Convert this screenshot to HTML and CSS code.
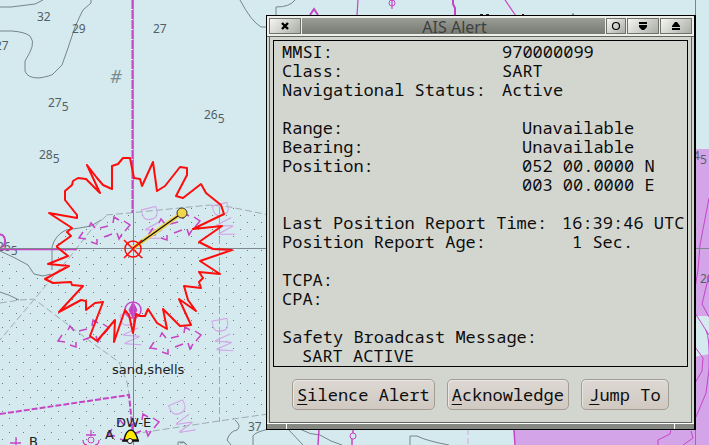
FILE: index.html
```html
<!DOCTYPE html>
<html lang="en">
<head>
<meta charset="utf-8">
<title>AIS Alert</title>
<link rel="stylesheet" href="styles.css">
</head>
<body>
<main class="chart">
  <svg class="map" viewBox="0 0 709 445" preserveAspectRatio="xMinYMin slice" role="img" aria-label="Nautical chart">
    <defs>
      <pattern id="dots" width="14" height="14" patternUnits="userSpaceOnUse">
        <rect x="9" y="12" width="1" height="1" fill="#6b7a7f"/>
        <rect x="2" y="5" width="1" height="1" fill="#6b7a7f"/>
      </pattern>
      <g id="lane" fill="none" stroke="#c545c5" stroke-width="1.5">
        <path d="M-22 2L-26 8L-19 9M-16 -3L-14 -7L-10 -2M-14 12L-8 14L-8 9M-5 -2L3 -4M-1 7L7 4M8 -7L9 -13L14 -10M19 -9L25 -5L20 1M12 3L14 9L17 4"/>
      </g>
    </defs>

    <!-- Sand area and restricted zone -->
    <path d="M0 251L15 258L33 274L44 276L52 270V247L60 235L100 222L108 215L158 212L210 205L230 207L268 214V415L133 434V445H0Z" fill="url(#dots)"/>
    <path d="M694 149H709V316H694Z M694 357L709 354V445H516L513 429H694Z" fill="#d3a5e8"/>

    <!-- Depth contours -->
    <g fill="none" stroke="#73868d" stroke-width="1">
      <path d="M0 7H11L35 4L43 0M0 31H12Q25 32 30 36Q34 41 32 47Q30 53 25 61V71Q27 78 39 78Q51 76 53 74L62 65L68 48L75 27L80 16L83 10L91 3V0M240 0Q251 21 261 27H267M276 16V7Q290 7 295 0"/>
      <path d="M52 270V247Q55 235 66 230Q80 228 91 226L101 220M0 251L15 258L28 265L34 274L43 276L51 274M0 292Q10 295 19 300"/>
      <path d="M235 420Q242 426 237 430Q230 431 227 440L231 445M280 425L269 429Q255 432 253 436V445M180 443Q184 441 187 445M288 429L303 445M300 429Q310 435 320 435L331 441L342 445M410 445V436H417Q427 441 449 445M178 445V442H184L187 445"/>
      <path d="M695.500 0V149M695.500 425V445"/>
      <path d="M106 215L129 213L210 205L230 207L269 215M106 216L91 230L69 258L0 340M0 303L20 300L34 299L91 342L119 362L127 382L129 394M219.500 207V422M133 434L219 421L268 414" stroke="#9aacb2" stroke-dasharray="7 3"/>
    </g>

    <!-- Soundings -->
    <g class="sounding">
      <text x="37" y="21">32</text><text x="72" y="33">29</text><text x="-5" y="50">27</text><text x="153" y="33">27</text>
      <text x="48" y="107">27<tspan dy="4">5</tspan></text>
      <text x="204" y="119">26<tspan dy="4">5</tspan></text>
      <text x="39" y="159">28<tspan dy="4">5</tspan></text>
      <text x="-3" y="251">26<tspan dy="4">5</tspan></text>
      <text x="248" y="431">37</text><text x="693" y="160">4<tspan dy="4">5</tspan></text><text x="700" y="283">20</text>
      <text x="110" y="83" class="hash">#</text>
    </g>

    <!-- Deep water route -->
    <g class="route">
      <text transform="translate(140 207) rotate(76)">DW</text>
      <text transform="translate(211 203) rotate(76)">DW</text>
      <text transform="translate(119 312) rotate(80)">DW</text>
      <text transform="translate(211 318) rotate(80)">DW</text>
      <text transform="translate(167 403) rotate(67)">DW</text>
    </g>
    <use href="#lane" x="105" y="230"/><use href="#lane" x="175" y="226"/>
    <use href="#lane" x="84" y="333"/><use href="#lane" x="176" y="340"/>
    <use href="#lane" x="134" y="427"/>
    <g fill="none" stroke="#c545c5">
      <path d="M132.500 0V213" stroke-width="2" stroke-dasharray="9 1"/>
      <path d="M0 249.500H77" stroke-width="1.500"/>
      <path d="M0 414L129 395L133 434" stroke-width="2" stroke-dasharray="6 2"/>
      <path d="M-2 235A5 6 0 0 1 5 241A5 6 0 0 1 1 247" stroke-width="2"/>
      <circle cx="133" cy="310" r="8" stroke-width="1.500"/>
      <path d="M133 302l4 8l-4 8l-4 -8z" fill="#c545c5"/>
      <path d="M357 15L358 0M505 0L516 16M392 -1V9" stroke-width="1.200"/>
      <circle cx="392" cy="3" r="3"/>
      <path d="M310 15l4 -6l4 6M453 0V4L455 8V15" stroke-width="2"/>
      <path d="M319 429L318 445M353 429V433M352 439V445M514 429L515 445" stroke-width="1.500"/>
      <circle cx="353" cy="436" r="3"/>
      <path d="M10 443H21M16 437V445M86 435H96M91 430V436M83 440Q83 445 87 445M99 440Q99 445 95 445" stroke-width="1.300"/>
      <circle cx="91" cy="440" r="3"/>
      <path d="M709 198L700 245L698 270L695 288M709 275L702 304L709 317M695 313L709 335M695 347L703 358L702 371L695 383M706 330Q710 338 709 370L706 393L696 417M671 429L670 434L658 440V445M691 431L693 438L683 445"/>
      <path d="M468 429V445" stroke="#d3a5e8" stroke-dasharray="6 3"/>
    </g>

    <!-- Cursor cross lines -->
    <path d="M133.500 213V445M0 248.500H709" fill="none" stroke="#7d878c" stroke-width="1"/>
    <path d="M133.500 0V213" fill="none" stroke="#7d878c" stroke-width="1" opacity=".7"/>

    <!-- SART alert burst -->
    <path class="burst" d="M57 246L71 236L67 232L72 228L49 213L77 218L77 215L65 200V191L72 185L73 181L78 178L86 179L100 193L87 165L97 178L103 185L112 189V166L118 164L123 158H130L134 178L140 179L142 186L153 162L157 191L165 186L180 167L187 168V175L176 196L183 198L201 184L206 193L221 205L224 214L193 229L222 226L199 242L213 249L232 250L200 261L220 274L199 272L203 278L199 282L201 288L184 286L188 300L196 311L179 299L191 325L180 326L163 309L167 329L157 323L148 309L145 316H140L136 314L133 333L129 315L125 310L114 342L115 320L97 341L90 336L103 302L95 303L86 310V301L81 300L59 312L83 286L72 285L71 282L53 283L45 279L69 266L48 264L68 256L57 247Z"/>
    <path d="M133 248L182 213" stroke="#f2d44b" stroke-width="4"/>
    <path d="M133 248L182 213" stroke="#111" stroke-width="1.300"/>
    <circle cx="182" cy="213" r="5" fill="#f2d649" stroke="#333"/>
    <g fill="none" stroke="#ff0c0c" stroke-width="1.500"><circle cx="133" cy="249" r="8"/><path d="M124 240L142 258M142 240L124 258"/></g>

    <path d="M122 441H139M124 440Q126 430 131 430Q135 430 138 440Z" fill="#ffeb00" stroke="#111" stroke-width="1.500"/>
    <circle cx="130" cy="441" r="2.500" fill="#fff" stroke="#111"/>
    <path d="M480 14.500H483M486 14.500H489M522 14.500H524M573 13.500V15" stroke="#1c2123"/>
    <g class="label">
      <text x="112" y="374">sand,shells</text><text x="116" y="427">DW-E</text>
      <text x="105" y="439">A</text><text x="29" y="446">B</text>
    </g>
  </svg>

  <section class="window" role="dialog" aria-labelledby="title">
    <header class="titlebar">
      <button class="tool wide" aria-label="Close"><svg viewBox="0 0 12 12"><path d="M3 3L9 9M9 3L3 9" stroke="#000" stroke-width="2.400"/></svg></button>
      <h1 id="title" class="title">AIS Alert</h1>
      <button class="tool" aria-label="Stick"><svg viewBox="0 0 12 12"><circle cx="6" cy="6" r="3.500" fill="none" stroke="#000" stroke-width="1.200"/></svg></button>
      <button class="tool wide" aria-label="Minimize"><svg viewBox="0 0 12 12"><path d="M2 2H10V4H2ZM2 5H10V7L7 10H5L2 7Z"/></svg></button>
      <button class="tool wide" aria-label="Maximize"><svg viewBox="0 0 12 12"><path d="M2 8H10V10H2ZM2 7V6L5 2H7L10 6V7Z"/></svg></button>
    </header>
    <div class="body">
      <div class="report">
        <dl class="group near">
          <dt>MMSI:</dt><dd>970000099</dd>
          <dt>Class:</dt><dd>SART</dd>
          <dt>Navigational Status:</dt><dd>Active</dd>
        </dl>
        <dl class="group mid">
          <dt>Range:</dt><dd>Unavailable</dd>
          <dt>Bearing:</dt><dd>Unavailable</dd>
          <dt>Position:</dt><dd>052 00.0000 N<br>003 00.0000 E</dd>
        </dl>
        <dl class="group far">
          <dt>Last Position Report Time:</dt><dd>16:39:46 UTC</dd>
          <dt>Position Report Age:</dt><dd class="age">1 Sec.</dd>
        </dl>
        <dl class="group mid">
          <dt>TCPA:</dt><dd></dd>
          <dt>CPA:</dt><dd></dd>
        </dl>
        <dl class="message">
          <dt>Safety Broadcast Message:</dt><dd>SART ACTIVE</dd>
        </dl>
      </div>
      <div class="actions">
        <button class="action"><u>S</u>ilence Alert</button>
        <button class="action"><u>A</u>cknowledge</button>
        <button class="action"><u>J</u>ump To</button>
      </div>
    </div>
    <footer class="grip"><span></span><span></span><span></span></footer>
  </section>
</main>
</body>
</html>
```
FILE: styles.css
```css
* { box-sizing: border-box; }

body { margin: 0; }

.chart {
  position: relative;
  min-height: 100vh;
  overflow: hidden;
  background: #d5eaef;
}

.map {
  position: absolute;
  inset: 0;
  width: 100%;
  height: 100%;
}

.sounding {
  font: 12px "Noto Sans", sans-serif;
  fill: #526066;
}

.sounding .hash { font-size: 18px; font-style: italic; fill: #7a8a8e; }

.route {
  font: 200 22px "DejaVu Sans", sans-serif;
  fill: #d2a6e8;
}

.label {
  font: 13px "DejaVu Sans", sans-serif;
  fill: #1c2123;
}

.burst {
  fill: none;
  stroke: #ff0c0c;
  stroke-width: 2;
  stroke-linejoin: round;
}

/* The window floats over the chart. */
.window {
  position: absolute;
  left: 266px;
  top: 15px;
  width: 430px;
  border: 1px solid #000;
  border-right-width: 2px;
  background: #d3d6cf;
}

.titlebar {
  display: flex;
  gap: 1px;
  height: 21px;
  padding: 2px;
  background: #eeeeea;
  border-bottom: 1px solid #62655f;
}

.title {
  flex: 1;
  margin: 0;
  padding-left: 2px;
  font: 16px/18px "Noto Sans", sans-serif;
  text-align: center;
  color: #3d403c;
  background: linear-gradient(#9a9d96, #777a73);
}

.tool {
  display: grid;
  place-items: center;
  width: 20px;
  padding: 0;
  border: 1px solid #6f716b;
  background: linear-gradient(135deg, #f5f5f2, #aaada6);
}

.tool.wide { width: 32px; }

.tool svg { width: 12px; height: 12px; }

.body {
  margin: 0 2px;
  padding: 3px 3px 12px;
  border: 1px solid #62655f;
  border-top: 0;
}

.report {
  display: grid;
  gap: 19px;
  padding: 1px 0 1px 8px;
  border: 1px solid #000;
  font: 17px/19px "Noto Sans Mono", "DejaVu Sans Mono", monospace;
  color: #0c0c0c;
  white-space: nowrap;
}

.group {
  display: grid;
  grid-auto-rows: minmax(19px, auto);
  margin: 0;
}

.near { grid-template-columns: 220px 1fr; }
.mid { grid-template-columns: 240px 1fr; }
.far { grid-template-columns: 280px 1fr; }

.group dd { margin: 0; }
.group .age { padding-left: 10px; }

.message { margin: 0; }
.message dd { margin-left: 20px; }

.actions {
  display: flex;
  justify-content: center;
  gap: 12px;
  margin-top: 12px;
}

.action {
  min-width: 88px;
  height: 31px;
  padding: 0 4px;
  border: 1px solid #a39c92;
  border-radius: 5px;
  background: linear-gradient(#ddd8d3, #d0c9c2);
  box-shadow: inset 1px 1px #eae6e2;
  font: 17px/19px "Noto Sans Mono", "DejaVu Sans Mono", monospace;
  color: #0c0c0c;
}

.action u { text-underline-offset: 3px; text-decoration-thickness: 1px; }

.grip {
  display: grid;
  grid-template-columns: 19px 1fr 19px;
  gap: 1px;
  height: 6px;
  padding-top: 1px;
  background: #fff;
}

.grip span { background: #868983; }
```
